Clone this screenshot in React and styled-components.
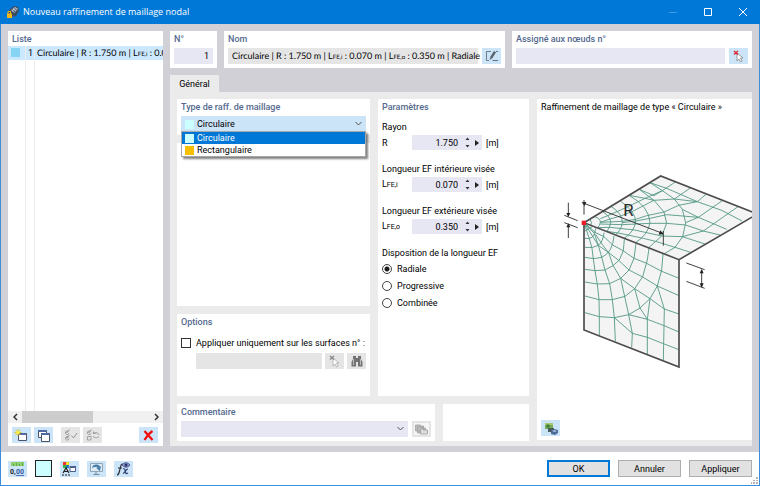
import React, { useState } from "react";
import styled, { createGlobalStyle, css } from "styled-components";

const GlobalStyle = createGlobalStyle`
  *, *::before, *::after { box-sizing: border-box; }
  html, body { margin: 0; padding: 0; }
  body, button, input, select {
    font-family: Roboto, "Open Sans", sans-serif;
    font-size: 9px;
    font-weight: 400;
    line-height: 14px;
    color: #000;
  }
  body { overflow: hidden; }
`;

/* ---------- window ---------- */

const Window = styled.div`
  display: grid;
  grid-template-rows: 24px 1fr 33px;
  min-height: 100vh;
  background: #d1d0d6;
  border: solid #3b8fd8;
  border-width: 0 1px 1px;
`;

const TitleBar = styled.header`
  display: flex;
  align-items: center;
  margin: 0 -1px;
  padding-left: 7px;
  background: #0078d7;
  color: #fff;
`;

const Title = styled.h1`
  flex: 1;
  margin: 0 0 0 4px;
  font-family: "Open Sans", sans-serif;
  font-size: 9px;
  font-weight: 400;
  line-height: 16px;
`;

const CaptionButton = styled.button`
  display: grid;
  place-items: center;
  width: 35px;
  height: 24px;
  padding: 0;
  border: 0;
  background: transparent;
  color: #fff;
  &:disabled { opacity: 0.25; }
`;

const Body = styled.main`
  display: grid;
  grid-template-columns: 155px minmax(0, 1fr);
  gap: 7px;
  padding: 7px 7px 6px;
`;

const Footer = styled.footer`
  display: flex;
  align-items: center;
  gap: 8px;
  padding: 0 7px;
  background: #fff;
`;

const Spacer = styled.span`
  flex: ${(p) => (p.$w ? `0 0 ${p.$w}px` : "1")};
`;

/* ---------- generic parts ---------- */

const Panel = styled.section`
  display: flex;
  flex-direction: column;
  min-width: 0;
  padding: 0 4px 4px;
  background: #fff;
`;

const headingStyle = css`
  margin: 0;
  padding-top: 1px;
  font-size: 9px;
  font-weight: 500;
  line-height: 14px;
  color: #54698f;
  white-space: nowrap;
`;

const Heading = styled.h2`
  ${headingStyle}
`;

const PanelLabel = styled.label`
  ${headingStyle}
`;

const FieldLine = styled.div`
  display: flex;
  align-items: center;
  gap: 4px;
  margin-top: 2px;
`;

const fieldStyle = css`
  min-width: 0;
  height: 16px;
  padding: 0 4px;
  border: 0;
  border-radius: 0;
  outline: 0;
  background: #e7e7f3;
`;

const TextField = styled.input`
  ${fieldStyle}
  flex: 1;
  text-align: ${(p) => p.$align || "left"};
  &:disabled { background: #e5e5e5; }
`;

const ReadOnlyField = styled.output`
  ${fieldStyle}
  flex: 1;
  padding-right: 0;
  background: #e5e5e5;
  line-height: 16px;
  white-space: nowrap;
`;

const Sub = styled.span`
  font-size: 7px;
`;

const Summary = styled.span`
  font-family: Lato, Roboto, sans-serif;
  text-rendering: geometricPrecision;
`;

const SummarySub = styled.span`
  font-size: 6px;
`;

const ToolButton = styled.button`
  display: grid;
  place-items: center;
  flex: none;
  width: 19px;
  height: 16px;
  padding: 0;
  border: 0;
  background: #cce4f7;
  &:disabled { background: #e5e5e5; }
  svg { display: block; }
`;

const DialogButton = styled.button`
  width: 63px;
  height: 17px;
  padding: 0;
  line-height: 12px;
  background: #e1e1e1;
  border: ${(p) => (p.$primary ? "2px solid #0078d7" : "1px solid #adadad")};
`;

/* ---------- list column ---------- */

const ListPanel = styled(Panel)`
  padding: 0 0 3px;
`;

const ListHeading = styled(Heading)`
  padding-left: 4px;
`;

const ListArea = styled.div`
  flex: 1;
  display: grid;
  grid-template-columns: 18px 9px minmax(0, 1fr);
  grid-template-rows: 14px 1fr;
`;

const ListCell = styled.div`
  overflow: hidden;
  white-space: nowrap;
  border-right: ${(p) => (p.$last ? "0" : "1px solid #ececec")};
  padding-left: ${(p) => p.$pad || 0}px;
  background: ${(p) => (p.$selected ? "#cce8ff" : "#fff")};
`;

const Swatch = styled.span`
  display: block;
  width: 9px;
  height: 9px;
  background: ${(p) => p.$color};
`;

const RowSwatch = styled(Swatch)`
  margin: 2px 0 0 3px;
`;

const ScrollBar = styled.div`
  display: flex;
  align-items: center;
  height: 12px;
  background: #f0f0f0;
`;

const ScrollArrow = styled.button`
  display: grid;
  place-items: center;
  width: 14px;
  height: 12px;
  padding: 0;
  border: 0;
  background: transparent;
`;

const ScrollTrack = styled.div`
  flex: 1;
  height: 12px;
`;

const ScrollThumb = styled.div`
  width: 56%;
  height: 12px;
  background: #cdcdcd;
`;

const ListTools = styled.div`
  display: flex;
  gap: 3px;
  margin-top: 4px;
  padding: 0 5px 0 4px;
`;

/* ---------- editor column ---------- */

const Editor = styled.div`
  display: grid;
  grid-template-rows: 36px 18px 1fr;
  row-gap: 7px;
  min-width: 0;
`;

const TopRow = styled.div`
  display: grid;
  grid-template-columns: 47px minmax(0, 281fr) minmax(0, 240fr);
  gap: 7px;
`;

const Tabs = styled.nav`
  display: flex;
`;

const Tab = styled.button`
  width: 49px;
  height: 18px;
  margin-top: 1px;
  padding: 0;
  border: 0;
  background: #ebebeb;
`;

const TabPage = styled.div`
  display: grid;
  grid-template-columns: minmax(0, 352fr) minmax(0, 215fr);
  gap: 8px;
  margin-top: -7px;
  padding: 7px 0 6px 7px;
  background: #ebebeb;
`;

const Forms = styled.div`
  display: grid;
  grid-template-rows: 1fr 36px;
  gap: 8px;
`;

const FormColumns = styled.div`
  display: grid;
  grid-template-columns: minmax(0, 193fr) minmax(0, 151fr);
  gap: 8px;
`;

const FormStack = styled.div`
  display: grid;
  grid-template-rows: 36px 1fr 82px;
  gap: 8px;
`;

const BottomRow = styled.div`
  display: grid;
  grid-template-columns: minmax(0, 258fr) minmax(0, 86fr);
  gap: 8px;
`;

const Combo = styled.div`
  position: relative;
  flex: 1;
`;

const ComboSelect = styled.select`
  ${fieldStyle}
  display: block;
  width: 100%;
  appearance: none;
  padding-left: ${(p) => (p.$swatch ? 16 : 4)}px;
  background: ${(p) => (p.$swatch ? "#cce4f7" : "#e7e7f3")};
`;

const ComboSwatch = styled(Swatch)`
  position: absolute;
  left: 4px;
  top: 4px;
`;

const ComboArrow = styled.svg`
  position: absolute;
  right: 3px;
  top: 5px;
  pointer-events: none;
`;

const ComboList = styled.ul`
  position: absolute;
  z-index: 2;
  top: 15px;
  left: 0;
  right: 0;
  margin: 0;
  padding: 0;
  list-style: none;
  background: #fff;
  border: 1px solid #a8a8a8;
  box-shadow: 2px 2px 2px rgba(0, 0, 0, 0.5);
`;

const ComboItem = styled.li`
  display: flex;
  align-items: center;
  gap: 3px;
  height: 12px;
  padding-left: 3px;
  line-height: 12px;
  color: ${(p) => (p.$active ? "#fff" : "#000")};
  background: ${(p) => (p.$active ? "#0078d7" : "#fff")};
`;

const ParamBlock = styled.fieldset`
  min-width: 0;
  margin: 0 0 12px;
  padding: 0;
  border: 0;
`;

const ParamTitle = styled.legend`
  display: block;
  padding: 0;
  line-height: 14px;
  white-space: nowrap;
`;

const ParamGroup = styled.div`
  margin-top: 6px;
`;

const ParamLine = styled.div`
  display: grid;
  grid-template-columns: 30px 70px auto;
  align-items: center;
  margin-top: 1px;
`;

const NumberBox = styled.div`
  display: flex;
  align-items: center;
  height: 15px;
  background: #e7e7f3;
`;

const NumberInput = styled.input`
  flex: 1;
  min-width: 0;
  height: 15px;
  padding: 0;
  border: 0;
  outline: 0;
  background: transparent;
  text-align: right;
`;

const SpinButton = styled.button`
  display: grid;
  place-items: center;
  width: 10px;
  height: 15px;
  padding: 0;
  border: 0;
  background: transparent;
`;

const Spinners = styled.div`
  display: flex;
  padding-left: 4px;
`;

const Unit = styled.span`
  padding-left: 4px;
`;

const ChoiceLabel = styled.label`
  display: flex;
  align-items: center;
  gap: 5px;
  height: 17px;
  white-space: nowrap;
`;

const Radio = styled.input`
  appearance: none;
  flex: none;
  width: 10px;
  height: 10px;
  margin: 0;
  border: 1px solid #444;
  border-radius: 50%;
  background: #fff;
  &:checked { background: radial-gradient(circle, #1c1c1c 0 2px, #fff 3px); }
`;

const Checkbox = styled.input`
  appearance: none;
  flex: none;
  width: 10px;
  height: 10px;
  margin: 0;
  border: 1px solid #333;
  background: #fff;
`;

const OptionLabel = styled(ChoiceLabel)`
  margin-top: 5px;
`;

const IndentedLine = styled(FieldLine)`
  margin-top: 2px;
  padding-left: 15px;
  gap: 3px;
`;

const PreviewPanel = styled(Panel)`
  padding-right: 0;
`;

const PreviewTitle = styled.p`
  margin: 0;
  padding-top: 1px;
  white-space: nowrap;
`;

const Drawing = styled.div`
  flex: 1;
  display: flex;
  align-items: center;
  justify-content: flex-end;
  padding-top: 6px;
`;

const ColorButton = styled.button`
  width: 17px;
  height: 17px;
  padding: 0;
  border: 1px solid #222;
  background: #ccffff;
`;

const Grip = styled.svg`
  position: absolute;
  right: 2px;
  bottom: 2px;
`;

/* ---------- icons ---------- */

const AppIcon = () => (
  <svg width="12" height="12" viewBox="0 0 12 12">
    <path d="M3 3 7 0l4 1 1 4-3 5-5 1-3-4Z" fill="#3c4a60" />
    <path d="M4 4 8 1l3 2-4 4Z" fill="#b9c4d4" />
    <path d="m5 3 3 3M7 2l3 2M4 6l4 3M9 3 6 7" stroke="#46536a" strokeWidth="0.7" fill="none" />
    <path d="M0 7.500h5V12H0Z" fill="#f2b619" />
    <path d="M1 8V5.500h2.500V8" stroke="#f2b619" fill="none" />
  </svg>
);

const EditIcon = () => (
  <svg width="14" height="12" viewBox="0 0 14 12" fill="none" stroke="#59636d">
    <path d="M6 1.500H1.500v9H4" strokeWidth="0.8" />
    <path d="M7.500 10.500H13M11 1.500h2" strokeWidth="0.9" />
    <path d="m4.500 10 1-3.500L9 1l2 1.200L7.500 8Z" fill="#59636d" stroke="none" />
  </svg>
);

const PickIcon = ({ muted }) => (
  <svg width="12" height="13" viewBox="0 0 12 13">
    <path d="M4 3v8l2-2 1.500 3 1.500-1-1.500-3H10Z" fill="#fff" stroke={muted ? "#aaa" : "#888"} strokeWidth="0.8" />
    <path d="m1 1 4 3.500M5 1 1 4.500" stroke={muted ? "#888" : "#e0202c"} strokeWidth="1.300" />
  </svg>
);

const BinocularsIcon = () => (
  <svg width="12" height="12" viewBox="0 0 12 12" fill="#737373">
    <path d="M2 1h3v2h2V1h3v3l1.500 3v4.500H7V7H5v4.500H.5V7L2 4Z" />
    <path d="M2.500 4v6M9.500 4v6" stroke="#bbb" />
  </svg>
);

const LibraryIcon = () => (
  <svg width="15" height="12" viewBox="0 0 15 12">
    <path d="M0 0h15v12H0Z" fill="#f5f5f5" />
    <path d="M1.500 2h5v1h3v5h-8ZM3.500 4h5v1h3v5h-8Z" fill="#bdbdbd" stroke="#9c9c9c" strokeWidth="0.7" />
    <path d="M6.500 6h3v1h4v4h-7Z" fill="#ddd" stroke="#9c9c9c" strokeWidth="0.8" />
  </svg>
);

const NewWindowIcon = () => (
  <svg width="15" height="14" viewBox="0 0 15 14">
    <path d="M4.500 5.500h8v7h-8Z" fill="#fff" stroke="#4b5365" />
    <path d="M5 5h7v2H5Z" fill="#5268a3" />
    <path d="M4 1v7M.5 4.500h7M1.500 2l5 5M6.500 2l-5 5" stroke="#d8c411" strokeWidth="0.900" />
    <circle cx="4" cy="4.500" r="1.700" fill="#fff04a" />
  </svg>
);

const CopyWindowIcon = () => (
  <svg width="14" height="13" viewBox="0 0 14 13">
    <path d="M1.500 1.500h8v7h-8Z" fill="#fff" stroke="#4b5365" />
    <path d="M1 1h9v2H1Z" fill="#5268a3" />
    <path d="M4.500 4.500h8v8h-8Z" fill="#fff" stroke="#4b5365" />
    <path d="M4 4h9v2H4Z" fill="#5268a3" />
  </svg>
);

const CheckAllIcon = () => (
  <svg width="14" height="12" viewBox="0 0 14 12" fill="none" stroke="#989898">
    <path d="M4.500 2.500A1.800 1.800 0 1 0 5 4M4.500 8A1.800 1.800 0 1 0 5 9.500" strokeWidth="0.9" />
    <path d="m2 2.500 1 1.300L5.500.5M2 8l1 1.300L5.500 6M7.500 6.500l2 2.500L13 4" />
  </svg>
);

const InvertIcon = () => (
  <svg width="14" height="12" viewBox="0 0 14 12" fill="none" stroke="#989898">
    <path d="M4.500 2.500A1.800 1.800 0 1 0 5 4M1.500 7.500h3.500v3.500H1.500Z" strokeWidth="0.9" />
    <path d="m2 2.500 1 1.300L5.500.5M13 6C12 3.500 9.500 3 7.500 4.500M7.500 4.500V2.500M7.500 4.500h2M7 7c1 2 4 2.500 6 .500" />
  </svg>
);

const DeleteIcon = () => (
  <svg width="11" height="11" viewBox="0 0 11 11" stroke="#f20d0d" strokeWidth="2.200" fill="none">
    <path d="m1.500 1 8 9M9.500 1c-3 2-6 6-8 9" />
  </svg>
);

const DecimalsIcon = () => (
  <svg width="15" height="14" viewBox="0 0 15 14">
    <path d="M1 0h13v4H1Z" fill="#8bd06c" />
    <path d="M3.500 2v2M6.500 1v3M9.500 2v2M12.500 1v3" stroke="#589a42" strokeWidth="0.7" />
    <text x="0" y="12" fontSize="7" fontWeight="700" fill="#222">0,</text>
    <text x="6" y="12" fontSize="7" fontWeight="700" fill="#33569c">00</text>
    <path d="M6 13.500h8" stroke="#33569c" strokeWidth="0.8" />
  </svg>
);

const DisplayIcon = () => (
  <svg width="15" height="14" viewBox="0 0 15 14">
    <path d="M1 0h3v3H1Z" fill="#e33" />
    <path d="M4 0h3v3H4Z" fill="#f2dc2b" />
    <path d="M1 3h3v3H1Z" fill="#36b34a" />
    <path d="M4 3h3v3H4Z" fill="#27b" />
    <path d="m1 11 3-5 3 5M2.500 9.500h3" stroke="#222" strokeWidth="1.200" fill="none" />
    <path d="M0 13h9" stroke="#222" strokeWidth="1.200" strokeDasharray="2 1" />
    <path d="M8 4.500h5.500v5H8Z" fill="#fff" stroke="#4b5f91" />
    <path d="M8 4h6v2H8Z" fill="#4b5f91" />
  </svg>
);

const MonitorIcon = () => (
  <svg width="15" height="13" viewBox="0 0 15 13">
    <path d="M1.500 1.500h12v8h-12Z" fill="#dcebf5" stroke="#8fa5b5" />
    <path d="M7 10v2M4.500 12.500h6" stroke="#71899b" />
    <path d="M3 6C3.500 2 9 1.500 11 4.500l1-.5-1 5L7.500 6.500l1.200-.5C8 4.500 5 4.500 3 6Z" fill="#4a7fac" />
  </svg>
);

const FormulaIcon = () => (
  <svg width="15" height="14" viewBox="0 0 15 14" fill="none">
    <path d="M1 13c2 0 2-2 3-6s1-5 3-5M2 6h4" stroke="#2b2f3a" strokeWidth="1.200" />
    <path d="M7 7c2-1 2 1 2.500 3s1 2 2.500 1M12 7c-2 0-3 4-5 4.500" stroke="#2b3f75" strokeWidth="1.200" />
    <path d="M6 3c2-3 6-3 8 0-2 3-6 3-8 0Z" fill="#8f9ad0" stroke="#3c4681" strokeWidth="0.8" />
    <circle cx="10" cy="3" r="1.500" fill="#2c3163" />
  </svg>
);

const ViewIcon = () => (
  <svg width="14" height="13" viewBox="0 0 14 13">
    <path d="M1 1h8v6H1Z" fill="#76ac55" />
    <path d="M1 1h8v2H1Z" fill="#a8c96d" />
    <circle cx="4" cy="4" r="1.700" fill="#397d39" />
    <path d="M4 6h6v4H4Z" fill="#485a5e" />
    <path d="m7 9 3-2 4 1v3l-3 2-4-1Z" fill="#496b96" />
    <path d="m8 9 2-1 3 1-2 1Z" fill="#a9c5e0" />
  </svg>
);

const Chevron = () => (
  <ComboArrow width="9" height="6" viewBox="0 0 9 6" fill="none" stroke="#555">
    <path d="m1.500 1 3 3 3-3" />
  </ComboArrow>
);

/* ---------- mesh drawing ---------- */

const wallMesh = [
  "M75 33 88 25 98 19",
  "M75 55Q88 58 96 52 106 44 107 25",
  "M75 82Q98 86 115 76 130 64 132 38",
  "M75 112Q103 120 125 112 158 98 162 48",
  "M75 148 105 152 135 150 159 137 178 120 190 92 193 58",
  "M75 186 112 192 149 191 182 175 207 150 222 115 228 70",
  "M75 228 117 239 157 239 195 229 224 206 248 170 262 120 267 84",
  "M75 278 118 290 163 293 206 284 240 264 270 236 292 198 305 150 309 102",
  "M72 8 88 56 96 85 100 117 105 152 112 193 117 239 118 290 118 346",
  "M72 8 103 40 115 76 125 111 135 150 149 191 157 239 163 293 166 364",
  "M72 8 115 76 146 98 159 136 182 175 193 225 206 284 217 340 215 383",
  "M182 175 224 206 270 236 313 267 357 282",
  "M107 44 128 75 145 97 176 121 207 150 248 171 292 198 357 227",
  "M72 8 107 38 132 50 158 75 189 92 222 115 260 130 303 153 357 175",
  "M224 206 240 264 262 298 262 405",
  "M270 236 262 298M206 284 262 298 310 316 357 336",
  "M163 293 217 340 262 352 310 371 357 389",
  "M292 198 313 267 310 421",
];

const roofMesh = [
  "M90 148Q98 158 92 166",
  "M103 140Q122 145 121 157 120 168 112 173",
  "M128 125Q152 140 152 158 150 173 141 184",
  "M153 109Q188 132 187 158 184 180 167 194",
  "M180 92Q226 125 227 153 224 185 192 205",
  "M207 76Q268 110 270 158 264 194 227 218",
  "M238 58 282 91 312 126 320 160 305 198 265 234",
  "M270 38 307 62 343 87 367 118 377 158 368 200 345 232 313 251",
  "M121 146 150 134 182 120 218 103 255 85 307 62 346 36",
  "M121 157 150 147 182 138 218 124 245 110 282 91 343 87",
  "M343 87 391 54",
  "M121 157 187 154 227 148 260 137 312 126 356 106 412 95 438 73",
  "M187 158 227 153 270 145 320 134 415 142 487 92",
  "M121 162 187 164 270 160 320 160 377 165 430 183 534 110",
  "M112 173 150 172 224 180 305 198 367 200 430 183",
  "M141 184 180 190 250 205 290 215 345 232 392 247",
  "M377 158 415 142",
  "M367 200 435 222",
  "M270 38 320 55 366 75 412 95 485 121 546 153",
  "M343 87 412 95M367 118 415 142 500 178",
  "M238 58 282 77 307 62M207 76 255 85 282 91",
  "M430 183 480 195",
];

const MeshDrawing = () => (
  <svg width="195" height="200" viewBox="81 30 585 600" role="img" aria-label="Maillage circulaire">
    <g fill="#f4f4f5" stroke="none">
      <path d="M162 188 392 48 682 162 447 299Z" />
      <path d="M162 188 447 299V621L162 510Z" />
    </g>
    <g fill="none" stroke="#4c9480" strokeWidth="2.600">
      <g transform="translate(90 180)">
        {wallMesh.map((d) => <path key={d} d={d} />)}
      </g>
      <g transform="translate(90 30)">
        {roofMesh.map((d) => <path key={d} d={d} />)}
      </g>
    </g>
    <g fill="none" stroke="#4d4b4d" strokeWidth="5">
      <path d="M162 188 392 48 682 162 447 299Z" />
      <path d="M447 299V621L162 510V188" />
    </g>
    <g fill="none" stroke="#333" strokeWidth="2.800">
      <path d="M162 120v44M162 130 400 221M400 213v44" />
      <path d="M103 166l40 16M103 188l40 15M115 128v38M115 234v-38" />
      <path d="M469 309l55 20M469 364l55 21M515 330v50" />
    </g>
    <g fill="#222">
      <path d="M400 222l-14 2 5-13ZM155 127l14-1-5 12Z" />
      <path d="M115 171l-6-12h12ZM115 190l-6 12h12Z" />
      <path d="M515 327l-6 13h12ZM515 383l-6-13h12Z" />
    </g>
    <path d="M155 182h13v13h-13Z" fill="#ee1c25" />
    <text x="280" y="168" fontSize="50" fontWeight="400" fill="#2a2a2a">R</text>
  </svg>
);

/* ---------- composed parts ---------- */

const Symbol = ({ sub }) => (sub ? <>L<Sub>{sub}</Sub></> : <>R</>);

const RefinementSummary = () => (
  <Summary>
    Circulaire | R : 1.750 m | L<SummarySub>FE,i</SummarySub> : 0.070 m | L<SummarySub>FE,o</SummarySub> : 0.350 m | Radiale
  </Summary>
);

function LengthParam({ id, title, sub, initial }) {
  const [value, setValue] = useState(initial);
  const change = (delta) => setValue((Number(value) + delta).toFixed(3));
  return (
    <ParamBlock>
      <ParamTitle>{title}</ParamTitle>
      <ParamLine>
        <label htmlFor={id}><Symbol sub={sub} /></label>
        <NumberBox>
          <NumberInput id={id} value={value} onChange={(e) => setValue(e.target.value)} />
          <Spinners>
            <SpinButton aria-label="Incrémenter" onClick={() => change(0.01)}>
              <svg width="5" height="11" viewBox="0 0 5 11" fill="#333">
                <path d="m.5 3 2-2.500 2 2.500ZM.5 8l2 2.500 2-2.500Z" />
              </svg>
            </SpinButton>
            <SpinButton aria-label="Plus d’options">
              <svg width="4" height="6" viewBox="0 0 4 6" fill="#222"><path d="m0 0 4 3-4 3Z" /></svg>
            </SpinButton>
          </Spinners>
        </NumberBox>
        <Unit>[m]</Unit>
      </ParamLine>
    </ParamBlock>
  );
}

const types = [
  { name: "Circulaire", color: "#ccffff" },
  { name: "Rectangulaire", color: "#f5bf00" },
];

const layouts = ["Radiale", "Progressive", "Combinée"];

export default function App() {
  const [type, setType] = useState("Circulaire");
  const [layout, setLayout] = useState("Radiale");

  return (
    <Window>
      <GlobalStyle />
      <TitleBar>
        <AppIcon />
        <Title>Nouveau raffinement de maillage nodal</Title>
        <CaptionButton aria-label="Réduire" disabled>
          <svg width="8" height="8" viewBox="0 0 8 8"><path d="M0 4.500h8" stroke="#fff" /></svg>
        </CaptionButton>
        <CaptionButton aria-label="Agrandir">
          <svg width="8" height="8" viewBox="0 0 8 8"><path d="M.5.5h7v7h-7Z" fill="none" stroke="#fff" /></svg>
        </CaptionButton>
        <CaptionButton aria-label="Fermer">
          <svg width="8" height="8" viewBox="0 0 8 8"><path d="m0 0 8 8M8 0 0 8" stroke="#fff" /></svg>
        </CaptionButton>
      </TitleBar>

      <Body>
        <ListPanel>
          <ListHeading>Liste</ListHeading>
          <ListArea>
            <ListCell $selected><RowSwatch $color="#86d4f3" /></ListCell>
            <ListCell $selected $pad={2}>1</ListCell>
            <ListCell $selected $last $pad={2}>
              <RefinementSummary />
            </ListCell>
            <ListCell />
            <ListCell />
            <ListCell $last />
          </ListArea>
          <ScrollBar>
            <ScrollArrow aria-label="Défiler à gauche">
              <svg width="5" height="8" viewBox="0 0 5 8" fill="none" stroke="#333" strokeWidth="1.500"><path d="M4 1 1 4l3 3" /></svg>
            </ScrollArrow>
            <ScrollTrack><ScrollThumb /></ScrollTrack>
            <ScrollArrow aria-label="Défiler à droite">
              <svg width="5" height="8" viewBox="0 0 5 8" fill="none" stroke="#333" strokeWidth="1.500"><path d="m1 1 3 3-3 3" /></svg>
            </ScrollArrow>
          </ScrollBar>
          <ListTools>
            <ToolButton aria-label="Nouveau"><NewWindowIcon /></ToolButton>
            <ToolButton aria-label="Copier"><CopyWindowIcon /></ToolButton>
            <Spacer $w={2} />
            <ToolButton aria-label="Tout sélectionner" disabled><CheckAllIcon /></ToolButton>
            <ToolButton aria-label="Inverser la sélection" disabled><InvertIcon /></ToolButton>
            <Spacer />
            <ToolButton aria-label="Supprimer"><DeleteIcon /></ToolButton>
          </ListTools>
        </ListPanel>

        <Editor>
          <TopRow>
            <Panel>
              <PanelLabel htmlFor="number">N°</PanelLabel>
              <FieldLine><TextField id="number" defaultValue="1" $align="right" /></FieldLine>
            </Panel>
            <Panel>
              <PanelLabel htmlFor="name">Nom</PanelLabel>
              <FieldLine>
                <ReadOnlyField id="name">
                  <RefinementSummary />
                </ReadOnlyField>
                <ToolButton aria-label="Modifier le nom"><EditIcon /></ToolButton>
              </FieldLine>
            </Panel>
            <Panel>
              <PanelLabel htmlFor="nodes">Assigné aux nœuds n°</PanelLabel>
              <FieldLine>
                <TextField id="nodes" />
                <ToolButton aria-label="Sélectionner les nœuds"><PickIcon /></ToolButton>
              </FieldLine>
            </Panel>
          </TopRow>

          <Tabs><Tab>Général</Tab></Tabs>

          <TabPage>
            <Forms>
              <FormColumns>
                <FormStack>
                  <Panel>
                    <PanelLabel htmlFor="type">Type de raff. de maillage</PanelLabel>
                    <FieldLine>
                      <Combo>
                        <ComboSelect id="type" $swatch value={type} onChange={(e) => setType(e.target.value)}>
                          {types.map((t) => <option key={t.name}>{t.name}</option>)}
                        </ComboSelect>
                        <ComboSwatch $color={types.find((t) => t.name === type).color} />
                        <Chevron />
                        <ComboList role="listbox" aria-label="Type de raff. de maillage">
                          {types.map((t) => (
                            <ComboItem
                              key={t.name}
                              role="option"
                              aria-selected={t.name === type}
                              $active={t.name === type}
                              onClick={() => setType(t.name)}
                            >
                              <Swatch $color={t.color} />
                              {t.name}
                            </ComboItem>
                          ))}
                        </ComboList>
                      </Combo>
                    </FieldLine>
                  </Panel>
                  <Panel />
                  <Panel>
                    <Heading>Options</Heading>
                    <OptionLabel>
                      <Checkbox type="checkbox" />
                      Appliquer uniquement sur les surfaces n° :
                    </OptionLabel>
                    <IndentedLine>
                      <TextField aria-label="Surfaces n°" disabled />
                      <ToolButton aria-label="Sélectionner les surfaces" disabled><PickIcon muted /></ToolButton>
                      <ToolButton aria-label="Rechercher" disabled><BinocularsIcon /></ToolButton>
                    </IndentedLine>
                  </Panel>
                </FormStack>

                <Panel>
                  <Heading>Paramètres</Heading>
                  <ParamGroup>
                    <LengthParam id="radius" title="Rayon" initial="1.750" />
                    <LengthParam id="inner" title="Longueur EF intérieure visée" sub="FE,i" initial="0.070" />
                    <LengthParam id="outer" title="Longueur EF extérieure visée" sub="FE,o" initial="0.350" />
                    <ParamBlock>
                      <ParamTitle>Disposition de la longueur EF</ParamTitle>
                      {layouts.map((name) => (
                        <ChoiceLabel key={name}>
                          <Radio type="radio" name="layout" checked={layout === name} onChange={() => setLayout(name)} />
                          {name}
                        </ChoiceLabel>
                      ))}
                    </ParamBlock>
                  </ParamGroup>
                </Panel>
              </FormColumns>

              <BottomRow>
                <Panel>
                  <PanelLabel htmlFor="comment">Commentaire</PanelLabel>
                  <FieldLine>
                    <Combo>
                      <ComboSelect id="comment"><option /></ComboSelect>
                      <Chevron />
                    </Combo>
                    <ToolButton aria-label="Bibliothèque de commentaires" disabled><LibraryIcon /></ToolButton>
                  </FieldLine>
                </Panel>
                <Panel />
              </BottomRow>
            </Forms>

            <PreviewPanel>
              <PreviewTitle>Raffinement de maillage de type « Circulaire »</PreviewTitle>
              <Drawing><MeshDrawing /></Drawing>
              <ToolButton aria-label="Vue"><ViewIcon /></ToolButton>
            </PreviewPanel>
          </TabPage>
        </Editor>
      </Body>

      <Footer>
        <ToolButton aria-label="Unités et décimales"><DecimalsIcon /></ToolButton>
        <ColorButton aria-label="Couleur" />
        <ToolButton aria-label="Propriétés d’affichage"><DisplayIcon /></ToolButton>
        <ToolButton aria-label="Affichage"><MonitorIcon /></ToolButton>
        <ToolButton aria-label="Formule"><FormulaIcon /></ToolButton>
        <Spacer />
        <DialogButton $primary>OK</DialogButton>
        <DialogButton>Annuler</DialogButton>
        <DialogButton>Appliquer</DialogButton>
        <Grip width="7" height="7" viewBox="0 0 7 7" fill="#b5b5b5">
          <path d="M5 0h2v2H5ZM5 3h2v1H5ZM2 3h2v1H2ZM5 5h2v2H5ZM2 5h2v2H2ZM0 5h1v2H0Z" />
        </Grip>
      </Footer>
    </Window>
  );
}
